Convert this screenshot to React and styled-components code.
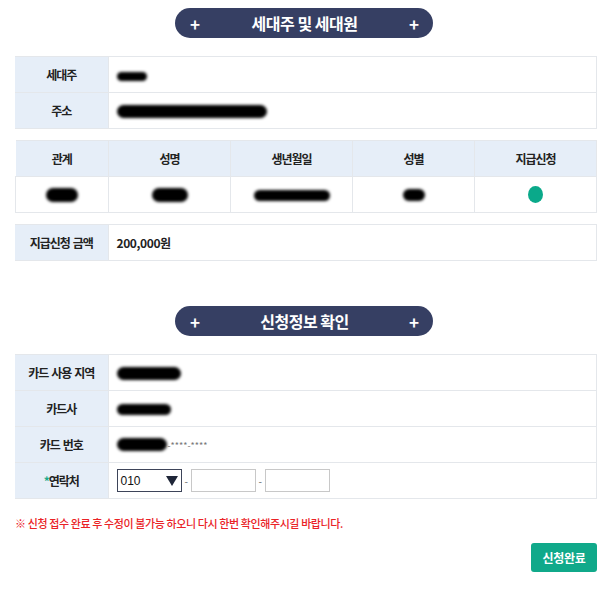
import React from 'react';
import styled, { createGlobalStyle } from 'styled-components';

const GlobalStyle = createGlobalStyle`
	body {
		margin: 0;
		background: #fff;
		font-family: 'Noto Sans CJK KR', 'Noto Sans', sans-serif;
		color: #222;
	}
`;

const members = [
	{ relation: 32, name: 36, birth: 76, gender: 22 },
];

function App() {
	return (
		<Page>
			<GlobalStyle />
			<Section>
				<TitleBar>
					<Plus>+</Plus>
					<TitleText>세대주 및 세대원</TitleText>
					<Plus>+</Plus>
				</TitleBar>
			</Section>

			<Table>
				<tbody>
					<tr>
						<Th $width='93px'>세대주</Th>
						<Td>
							<Blob $w={30} $h={9} />
						</Td>
					</tr>
					<tr>
						<Th>주소</Th>
						<Td>
							<Blob $w={150} $h={13} />
						</Td>
					</tr>
				</tbody>
			</Table>

			<Table>
				<thead>
					<tr>
						<Th $width='93px'>관계</Th>
						<Th>성명</Th>
						<Th>생년월일</Th>
						<Th>성별</Th>
						<Th>지급신청</Th>
					</tr>
				</thead>
				<tbody>
					{members.map((m, i) => (
						<tr key={i}>
							<Td $center>
								<Blob $w={m.relation} $h={14} />
							</Td>
							<Td $center>
								<Blob $w={m.name} $h={14} />
							</Td>
							<Td $center>
								<Blob $w={m.birth} $h={11} />
							</Td>
							<Td $center>
								<Blob $w={m.gender} $h={12} />
							</Td>
							<Td $center>
								<Dot />
							</Td>
						</tr>
					))}
				</tbody>
			</Table>

			<Table>
				<tbody>
					<tr>
						<Th $width='93px'>지급신청 금액</Th>
						<Td $bold>200,000원</Td>
					</tr>
				</tbody>
			</Table>

			<Section $top='45px'>
				<TitleBar>
					<Plus>+</Plus>
					<TitleText>신청정보 확인</TitleText>
					<Plus>+</Plus>
				</TitleBar>
			</Section>

			<Table>
				<tbody>
					<tr>
						<Th $width='93px'>카드 사용 지역</Th>
						<Td>
							<Blob $w={64} $h={13} />
						</Td>
					</tr>
					<tr>
						<Th>카드사</Th>
						<Td>
							<Blob $w={54} $h={11} />
						</Td>
					</tr>
					<tr>
						<Th>카드 번호</Th>
						<Td>
							<CardNo>
								<Blob $w={50} $h={13} />
								<Masked>-****-****</Masked>
							</CardNo>
						</Td>
					</tr>
					<tr>
						<Th>
							<Star>*</Star>연락처
						</Th>
						<Td>
							<PhoneRow>
								<Select>
									<span>010</span>
									<Arrow />
								</Select>
								<Dash>-</Dash>
								<Input />
								<Dash>-</Dash>
								<Input />
							</PhoneRow>
						</Td>
					</tr>
				</tbody>
			</Table>

			<Notice>※ 신청 접수 완료 후 수정이 불가능 하오니 다시 한번 확인해주시길 바랍니다.</Notice>

			<ButtonRow>
				<SubmitButton type='button'>신청완료</SubmitButton>
			</ButtonRow>
		</Page>
	);
}

export default App;

const Page = styled.div`
	width: 582px;
	padding: 8px 3px 20px 15px;
`;

const Section = styled.div`
	display: flex;
	justify-content: center;
	margin-top: ${(p) => p.$top || '0'};
	margin-bottom: 18px;
	padding-right: 4px;
`;

const TitleBar = styled.div`
	width: 258px;
	height: 30px;
	box-sizing: border-box;
	padding: 0 14px 0 15px;
	border-radius: 15px;
	background: #363f63;
	color: #fff;
	display: flex;
	align-items: center;
	justify-content: space-between;
`;

const Plus = styled.span`
	font-size: 17px;
	font-weight: 700;
	line-height: 1;
`;

const TitleText = styled.span`
	font-size: 16px;
	font-weight: 700;
	letter-spacing: -0.5px;
`;

const Table = styled.table`
	width: 582px;
	border-collapse: collapse;
	table-layout: fixed;
	margin-bottom: 11px;
	border-top: 1px solid #e4e7eb;
	border-bottom: 1px solid #e4e7eb;
	font-size: 12px;
`;

const Th = styled.th`
	width: ${(p) => p.$width || 'auto'};
	height: 36px;
	box-sizing: border-box;
	padding: 0;
	background: #e6eef8;
	border: 1px solid #e4e7eb;
	border-left: none;
	font-weight: 700;
	text-align: center;
	letter-spacing: -1.1px;
	word-spacing: 1.5px;
	color: #222;
`;

const Td = styled.td`
	height: 36px;
	box-sizing: border-box;
	padding: 0 8px;
	border: 1px solid #e4e7eb;
	text-align: ${(p) => (p.$center ? 'center' : 'left')};
	font-weight: ${(p) => (p.$bold ? 700 : 400)};
	letter-spacing: -0.4px;
	vertical-align: middle;
	line-height: 1;
`;

const Blob = styled.span`
	display: inline-block;
	vertical-align: middle;
	width: ${(p) => p.$w}px;
	height: ${(p) => p.$h}px;
	border-radius: ${(p) => p.$h / 2}px;
	background: #000;
	filter: blur(1.5px);
`;

const Dot = styled.span`
	display: inline-block;
	vertical-align: middle;
	width: 15px;
	height: 17px;
	border-radius: 50%;
	background: #0aa98a;
`;

const CardNo = styled.div`
	display: flex;
	align-items: center;
`;

const Masked = styled.span`
	font-size: 9px;
	letter-spacing: 0;
	color: #777;
	margin-left: 1px;
	padding-top: 1px;
`;

const Star = styled.span`
	color: #1aa98a;
`;

const PhoneRow = styled.div`
	display: flex;
	align-items: center;
`;

const Select = styled.div`
	width: 65px;
	height: 23px;
	box-sizing: border-box;
	border: 1px solid #3d4459;
	display: flex;
	align-items: center;
	justify-content: space-between;
	padding: 0 3px 0 3px;
	font-family: 'Liberation Sans', Arial, sans-serif;
	font-size: 12px;
	letter-spacing: 0;
	color: #111;
`;

const Arrow = styled.span`
	width: 0;
	height: 0;
	border-left: 6px solid transparent;
	border-right: 6px solid transparent;
	border-top: 10px solid #1f2638;
`;

const Dash = styled.span`
	width: 9px;
	text-align: center;
	font-size: 10px;
	color: #666;
`;

const Input = styled.input`
	width: 65px;
	height: 23px;
	box-sizing: border-box;
	border: 1px solid #c8c8c8;
	padding: 0 4px;
	margin: 0;
	outline: none;
`;

const Notice = styled.p`
	margin: 16px 0 0;
	color: #ea2226;
	font-size: 11px;
	font-weight: 500;
	letter-spacing: -0.4px;
`;

const ButtonRow = styled.div`
	display: flex;
	justify-content: flex-end;
	margin-top: 12px;
`;

const SubmitButton = styled.button`
	width: 66px;
	height: 29px;
	border: none;
	border-radius: 3px;
	background: #10a98a;
	color: #fff;
	font-family: 'Noto Sans CJK KR', sans-serif;
	font-size: 12px;
	font-weight: 700;
	letter-spacing: -0.3px;
	cursor: pointer;
`;
